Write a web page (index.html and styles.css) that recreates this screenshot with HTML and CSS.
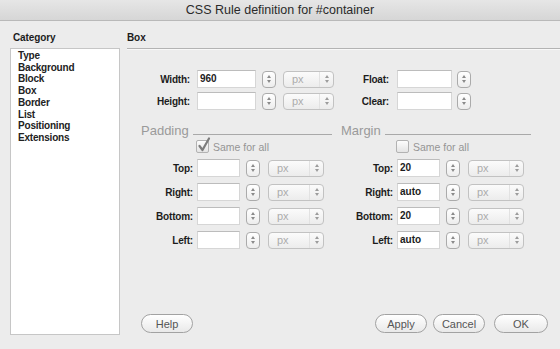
FILE: index.html
```html
<!DOCTYPE html>
<html lang="en">
<head>
  <meta charset="UTF-8">
  <title>CSS Rule definition for #container</title>
  <link rel="stylesheet" href="styles.css">
</head>
<body>
  <div class="titlebar">CSS Rule definition for #container</div>

  <div class="dialog">
    <div class="sidebar">
      <div class="heading">Category</div>
      <ul class="cats">
        <li>Type</li>
        <li>Background</li>
        <li>Block</li>
        <li>Box</li>
        <li>Border</li>
        <li>List</li>
        <li>Positioning</li>
        <li>Extensions</li>
      </ul>
    </div>

    <div class="panel">
      <div class="heading panel-head">Box</div>

      <div class="props">
        <div class="row">
          <span class="lbl lbl-main">Width:</span>
          <span class="field field-main">960</span>
          <span class="stepper stepper-main"><i class="up"></i><i class="down"></i></span>
          <span class="select select-main"><span class="sel-text">px</span><span class="sel-arrows"><i class="up"></i><i class="down"></i></span></span>
          <span class="lbl lbl-side">Float:</span>
          <span class="field field-side"></span>
          <span class="stepper stepper-side"><i class="up"></i><i class="down"></i></span>
        </div>
        <div class="row">
          <span class="lbl lbl-main">Height:</span>
          <span class="field field-main"></span>
          <span class="stepper stepper-main"><i class="up"></i><i class="down"></i></span>
          <span class="select select-main"><span class="sel-text">px</span><span class="sel-arrows"><i class="up"></i><i class="down"></i></span></span>
          <span class="lbl lbl-side">Clear:</span>
          <span class="field field-side"></span>
          <span class="stepper stepper-side"><i class="up"></i><i class="down"></i></span>
        </div>
      </div>

      <div class="groups">
        <div class="group">
          <div class="legend"><span>Padding</span></div>
          <div class="same">
            <span class="check">
              <svg class="tick" width="14" height="16" viewBox="0 0 14 16"><path d="M2.5 9 L5.5 13 L12 1.5" fill="none" stroke="#7d7d7d" stroke-width="2.2" stroke-linecap="round" stroke-linejoin="round"/></svg>
            </span>
            Same for all
          </div>
          <div class="grows">
            <div class="grow">
              <span class="lbl lbl-group">Top:</span>
              <span class="field field-group"></span>
              <span class="stepper"><i class="up"></i><i class="down"></i></span>
              <span class="select select-group"><span class="sel-text">px</span><span class="sel-arrows"><i class="up"></i><i class="down"></i></span></span>
            </div>
            <div class="grow">
              <span class="lbl lbl-group">Right:</span>
              <span class="field field-group"></span>
              <span class="stepper"><i class="up"></i><i class="down"></i></span>
              <span class="select select-group"><span class="sel-text">px</span><span class="sel-arrows"><i class="up"></i><i class="down"></i></span></span>
            </div>
            <div class="grow">
              <span class="lbl lbl-group">Bottom:</span>
              <span class="field field-group"></span>
              <span class="stepper"><i class="up"></i><i class="down"></i></span>
              <span class="select select-group"><span class="sel-text">px</span><span class="sel-arrows"><i class="up"></i><i class="down"></i></span></span>
            </div>
            <div class="grow">
              <span class="lbl lbl-group">Left:</span>
              <span class="field field-group"></span>
              <span class="stepper"><i class="up"></i><i class="down"></i></span>
              <span class="select select-group"><span class="sel-text">px</span><span class="sel-arrows"><i class="up"></i><i class="down"></i></span></span>
            </div>
          </div>
        </div>

        <div class="group group-margin">
          <div class="legend"><span>Margin</span></div>
          <div class="same">
            <span class="check"></span>
            Same for all
          </div>
          <div class="grows">
            <div class="grow">
              <span class="lbl lbl-group">Top:</span>
              <span class="field field-group">20</span>
              <span class="stepper"><i class="up"></i><i class="down"></i></span>
              <span class="select select-group"><span class="sel-text">px</span><span class="sel-arrows"><i class="up"></i><i class="down"></i></span></span>
            </div>
            <div class="grow">
              <span class="lbl lbl-group">Right:</span>
              <span class="field field-group">auto</span>
              <span class="stepper"><i class="up"></i><i class="down"></i></span>
              <span class="select select-group"><span class="sel-text">px</span><span class="sel-arrows"><i class="up"></i><i class="down"></i></span></span>
            </div>
            <div class="grow">
              <span class="lbl lbl-group">Bottom:</span>
              <span class="field field-group">20</span>
              <span class="stepper"><i class="up"></i><i class="down"></i></span>
              <span class="select select-group"><span class="sel-text">px</span><span class="sel-arrows"><i class="up"></i><i class="down"></i></span></span>
            </div>
            <div class="grow">
              <span class="lbl lbl-group">Left:</span>
              <span class="field field-group">auto</span>
              <span class="stepper"><i class="up"></i><i class="down"></i></span>
              <span class="select select-group"><span class="sel-text">px</span><span class="sel-arrows"><i class="up"></i><i class="down"></i></span></span>
            </div>
          </div>
        </div>
      </div>

      <div class="buttons">
        <button class="btn">Help</button>
        <span class="spacer"></span>
        <button class="btn">Apply</button>
        <button class="btn btn-cancel">Cancel</button>
        <button class="btn btn-ok">OK</button>
      </div>
    </div>
  </div>
</body>
</html>
```

FILE: styles.css
```css
body {
  margin: 0;
  width: 560px;
  height: 349px;
  overflow: hidden;
  background: #ececec;
  font-family: 'Liberation Sans', Arial, sans-serif;
  color: #1c1c1c;
}

.titlebar {
  height: 20px;
  line-height: 20px;
  text-align: center;
  font-size: 12.5px;
  color: #2a2a2a;
  background: linear-gradient(#e6e6e6, #d6d6d6);
  border-bottom: 1px solid #b9b9b9;
}

.dialog {
  display: flex;
  padding-top: 11px;
}

.heading {
  font-size: 10px;
  font-weight: bold;
  line-height: 12px;
  letter-spacing: -0.1px;
}

/* category list */
.sidebar {
  margin-left: 10px;
  width: 110px;
}

.sidebar .heading {
  padding-left: 3px;
  margin-bottom: 4px;
}

.cats {
  list-style: none;
  margin: 0;
  box-sizing: border-box;
  height: 287px;
  padding: 1px 0 0 7px;
  background: #fff;
  border: 1px solid #c6c6c6;
  font-size: 10px;
  font-weight: bold;
  line-height: 11.7px;
  letter-spacing: -0.2px;
  color: #222;
}

/* right panel */
.panel {
  flex: 1;
  margin-left: 7px;
}

.panel-head {
  padding-bottom: 4px;
  border-bottom: 1px solid #b3b3b3;
  box-shadow: 0 1px 0 #f8f8f8;
}

.lbl {
  font-size: 10px;
  font-weight: bold;
  text-align: right;
  letter-spacing: -0.2px;
  color: #1c1c1c;
}

.field {
  box-sizing: border-box;
  height: 18px;
  padding-left: 2px;
  background: #fff;
  border: 1px solid #d6d6d6;
  border-top-color: #bcbcbc;
  font-size: 10px;
  font-weight: bold;
  line-height: 16px;
}

.stepper {
  box-sizing: border-box;
  width: 14px;
  height: 17px;
  border: 1px solid #ababab;
  border-radius: 4px;
  background: linear-gradient(#ffffff, #ededed);
  display: flex;
  flex-direction: column;
  align-items: center;
  justify-content: center;
  gap: 2px;
}

.up {
  width: 0;
  height: 0;
  border-left: 2px solid transparent;
  border-right: 2px solid transparent;
  border-bottom: 3px solid #8a8a8a;
}

.down {
  width: 0;
  height: 0;
  border-left: 2px solid transparent;
  border-right: 2px solid transparent;
  border-top: 3px solid #8a8a8a;
}

.select {
  box-sizing: border-box;
  height: 17px;
  display: flex;
  border: 1px solid #c2c2c2;
  border-radius: 4px;
  background: linear-gradient(#fbfbfb, #ececec);
}

.sel-text {
  flex: 1;
  padding-left: 8px;
  font-size: 11px;
  line-height: 15px;
  color: #acacac;
}

.sel-arrows {
  width: 13px;
  display: flex;
  flex-direction: column;
  align-items: center;
  justify-content: center;
  gap: 2px;
  border-left: 1px solid #e2e2e2;
}

.sel-arrows .up {
  border-bottom-color: #9c9c9c;
}

.sel-arrows .down {
  border-top-color: #9c9c9c;
}

/* width / height / float / clear */
.props {
  margin-top: 21px;
  display: flex;
  flex-direction: column;
  gap: 4px;
}

.row {
  display: flex;
  align-items: center;
  height: 18px;
}

.lbl-main {
  width: 63px;
  margin-right: 7px;
}

.field-main {
  width: 59px;
}

.stepper-main {
  margin-left: 6px;
}

.select-main {
  width: 51px;
  margin-left: 7px;
}

.lbl-side {
  width: 55px;
  margin-right: 8px;
}

.field-side {
  width: 55px;
}

.stepper-side {
  margin-left: 5px;
}

/* padding / margin groups */
.groups {
  display: flex;
  gap: 9px;
  margin-top: 13px;
  margin-left: 14px;
}

.group {
  width: 191px;
}

.group-margin {
  width: 190px;
}

.legend {
  display: flex;
  height: 15px;
  font-size: 13px;
  line-height: 15px;
  color: #9a9a9a;
}

.legend::after {
  content: "";
  flex: 1;
  align-self: flex-end;
  height: 1px;
  margin: 0 0 3px 4px;
  background: #a9a9a9;
}

.same {
  display: flex;
  align-items: center;
  height: 17px;
  padding-left: 55px;
  font-size: 10.5px;
  color: #959595;
}

.check {
  position: relative;
  box-sizing: border-box;
  width: 13px;
  height: 13px;
  margin-right: 4px;
  border: 1px solid #b2b2b2;
  border-radius: 2px;
  background: linear-gradient(#fdfdfd, #e4e4e4);
}

.tick {
  position: absolute;
  left: 0;
  top: -4px;
}

.grows {
  margin-top: 4px;
  display: flex;
  flex-direction: column;
  gap: 6px;
}

.grow {
  display: flex;
  align-items: center;
  height: 18px;
}

.lbl-group {
  width: 52px;
  margin-right: 4px;
}

.field-group {
  width: 43px;
}

.grow .stepper {
  margin-left: 6px;
}

.select-group {
  width: 56px;
  margin-left: 8px;
}

/* buttons */
.buttons {
  display: flex;
  margin-top: 65px;
  padding: 0 12px 0 14px;
}

.spacer {
  flex: 1;
}

.btn {
  box-sizing: border-box;
  width: 52px;
  height: 19px;
  padding: 0;
  border: 1px solid #a2a2a2;
  border-radius: 10px;
  background: linear-gradient(#ffffff, #e9e9e9);
  font-family: 'Liberation Sans', Arial, sans-serif;
  font-size: 11px;
  color: #555;
}

.btn-cancel {
  margin-left: 6px;
}

.btn-ok {
  width: 54px;
  margin-left: 9px;
}
```
